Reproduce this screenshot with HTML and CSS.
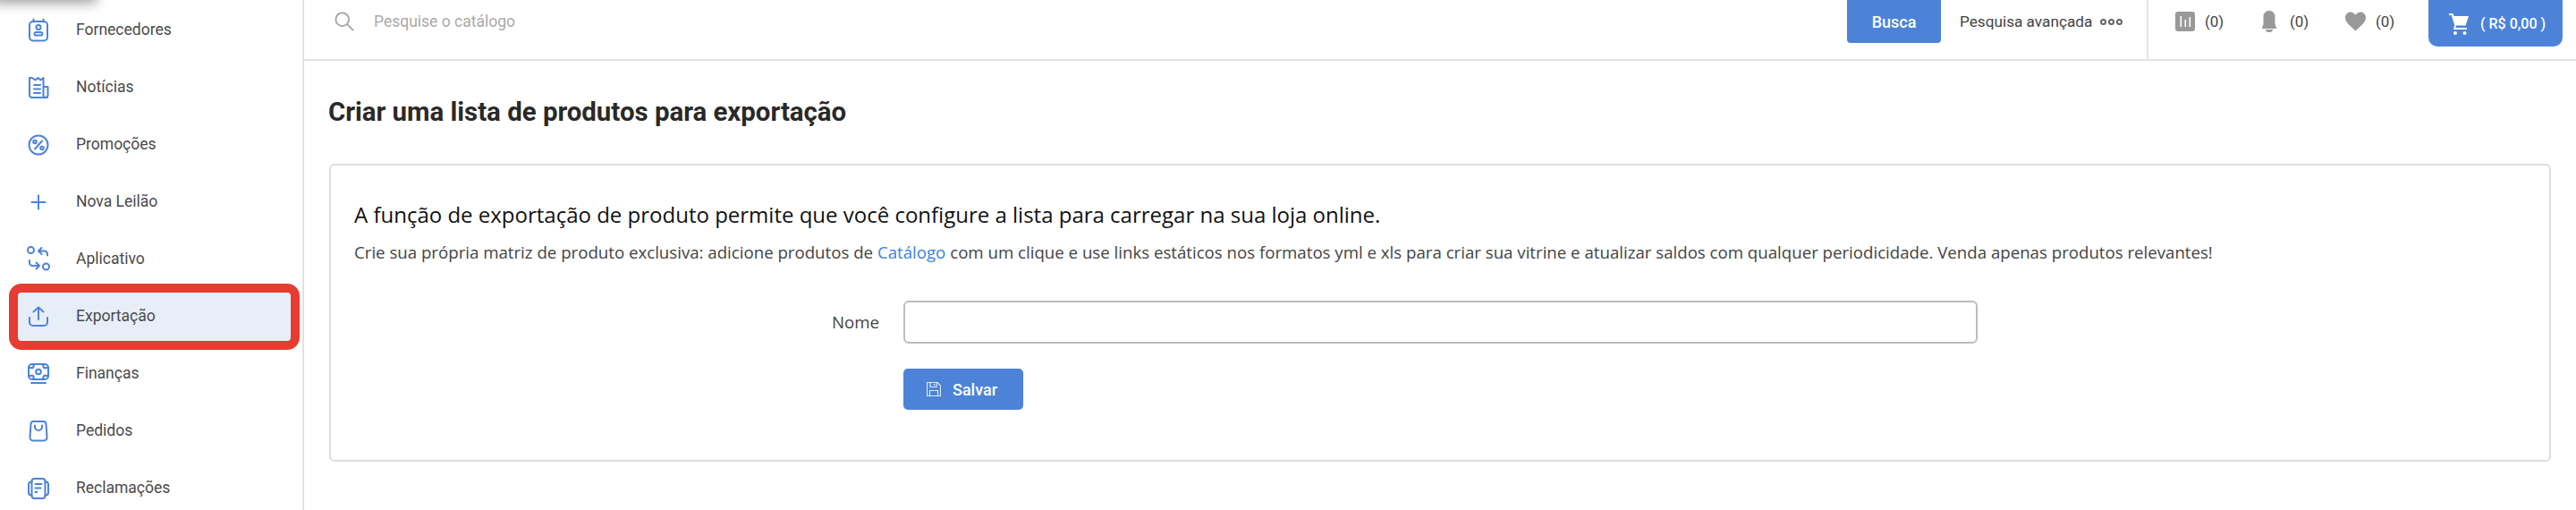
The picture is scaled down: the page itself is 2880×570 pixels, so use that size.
FILE: index.html
```html
<!DOCTYPE html>
<html lang="pt">
<head>
<meta charset="utf-8">
<title>Exportação</title>
<link rel="stylesheet" href="styles.css">
</head>
<body>
<div class="popup-edge"></div>
<div class="app">
  <aside class="sidebar">
    <nav class="menu">
      <a class="item"><svg class="mi" viewBox="0 0 26 26"><rect x="3" y="3" width="20" height="21.500" rx="4"/><path d="M7.500 0.500v3M18.500 0.500v3"/><circle cx="13" cy="9.500" r="2.600"/><rect x="8.500" y="15" width="9" height="3.600" rx="1.800"/></svg><span>Fornecedores</span></a>
      <a class="item"><svg class="mi" viewBox="0 0 26 26"><path d="M3 2v19a3 3 0 0 0 3 3h17M19 12h4.500v9.500a2.500 2.500 0 0 1-5 0V2l-3 2.500-3-2.500-3 2.500L6 2 3 2"/><path d="M8 10h7M8 14.500h7M8 19h7"/></svg><span>Notícias</span></a>
      <a class="item"><svg class="mi" viewBox="0 0 26 26"><circle cx="13" cy="13" r="10.500"/><path d="M17 8.500 9 17.500"/><circle cx="9" cy="9.500" r="1.800"/><circle cx="17" cy="16.500" r="1.800"/></svg><span>Promoções</span></a>
      <a class="item"><svg class="mi" viewBox="0 0 26 26"><path d="M13 5.500v15M5.500 13h15"/></svg><span>Nova Leilão</span></a>
      <a class="item"><svg class="mi" viewBox="0 0 26 26"><circle cx="4.500" cy="2.500" r="3.500"/><path d="M23 8.500V7a3.500 3.500 0 0 0-3.500-3.500H13M16.500 0 13 3.500 16.500 7"/><circle cx="21.500" cy="21" r="3.500"/><path d="M3 14v2.500A3.500 3.500 0 0 0 6.500 20H14M10.500 16.500 14 20l-3.500 3.500"/></svg><span>Aplicativo</span></a>
      <a class="item active"><svg class="mi" viewBox="0 0 26 26"><path d="M13 16V2.500M7.500 7.500 13 2.500l5.500 5"/><path d="M3 14v5a4 4 0 0 0 4 4h12a4 4 0 0 0 4-4v-5"/></svg><span>Exportação</span></a>
      <a class="item"><svg class="mi" viewBox="0 0 26 26"><rect x="2" y="2" width="22" height="17" rx="4"/><circle cx="13" cy="10.500" r="2.800"/><path d="M2 6h2.500a2 2 0 0 0 2-4M24 6h-2.500a2 2 0 0 1-2-4M2 15h2.500a2 2 0 0 1 2 4M24 15h-2.500a2 2 0 0 0-2 4M5 23h16"/></svg><span>Finanças</span></a>
      <a class="item"><svg class="mi" viewBox="0 0 26 26"><path d="M7.500 2h11a3 3 0 0 1 3 2.700l1 15a3.500 3.500 0 0 1-3.500 3.800H7a3.500 3.500 0 0 1-3.500-3.800l1-15A3 3 0 0 1 7.500 2Z"/><path d="M9 6.500v1.500a4 4 0 0 0 8 0V6.500"/></svg><span>Pedidos</span></a>
      <a class="item"><svg class="mi" viewBox="0 0 26 26"><rect x="5.500" y="2" width="15" height="22" rx="3"/><path d="M5.500 5.500H5a3 3 0 0 0-3 3v9a3 3 0 0 0 3 3h.5M20.500 5.500h.5a3 3 0 0 1 3 3v9a3 3 0 0 1-3 3h-.5"/><path d="M9.500 8h7M9.500 12.500h6M9.500 17h2"/></svg><span>Reclamações</span></a>
    </nav>
  </aside>
  <div class="main">
    <header class="topbar">
      <div class="search">
        <svg class="search-icon" viewBox="0 0 24 24"><circle cx="9.500" cy="9.500" r="8"/><path d="m15.500 15.500 7.500 7.500"/></svg>
        <span class="placeholder">Pesquise o catálogo</span>
      </div>
      <a class="btn-search">Busca</a>
      <a class="advanced"><span>Pesquisa avançada</span><span class="dots"><i></i><i></i><i></i></span></a>
      <div class="counters">
        <div class="counter c1"><svg class="ci" viewBox="0 0 22 22"><path fill-rule="evenodd" d="M3 0h16a3 3 0 0 1 3 3v16a3 3 0 0 1-3 3H3a3 3 0 0 1-3-3V3a3 3 0 0 1 3-3Zm2.500 5v12h1.600V5Zm5 4v8h1.600V9Zm5-3v11h1.600V6Z"/></svg><span>(0)</span></div>
        <div class="counter c2"><svg class="ci bell" viewBox="0 0 16 24"><path d="M8 0c3.500 0 6.500 2.500 6.500 6.500v8.500l1.500 4v1H0v-1l1.500-4V6.500C1.500 2.500 4.500 0 8 0Z"/><path d="M4 21h8a4 3 0 0 1-8 0Z"/></svg><span>(0)</span></div>
        <div class="counter c3"><svg class="ci heart" viewBox="0 0 24 22"><path d="M12 22C6 16 0 12 0 6.500 0 2.500 3 0 6 0c2.500 0 4.800 1.300 6 3.500C13.200 1.300 15.500 0 18 0c3 0 6 2.500 6 6.500C24 12 18 16 12 22Z"/></svg><span>(0)</span></div>
      </div>
      <a class="cart"><svg class="cart-icon" viewBox="0 0 22 25"><path d="M0 1h4.500l1.200 3H22l-3.500 10.500H8l-.5 2.500H20v2H5l1.200-5L2.800 3H0Z"/><circle cx="7" cy="23" r="2"/><circle cx="17.500" cy="23" r="2"/></svg><span>( R$ 0,00 )</span></a>
    </header>
    <main class="content">
      <h1 class="title">Criar uma lista de produtos para exportação</h1>
      <section class="card">
        <h2 class="lead">A função de exportação de produto permite que você configure a lista para carregar na sua loja online.</h2>
        <p class="desc">Crie sua própria matriz de produto exclusiva: adicione produtos de <a class="link">Catálogo</a> com um clique e use links estáticos nos formatos yml e xls para criar sua vitrine e atualizar saldos com qualquer periodicidade. Venda apenas produtos relevantes!</p>
        <form class="form">
          <div class="form-row">
            <label class="label">Nome</label>
            <div class="input"></div>
          </div>
          <a class="btn-save"><svg class="save-icon" viewBox="0 0 16 16"><path d="M.5.500h11.500l3.500 3.500v11.500H.5Z"/><path d="M4 .500v5h7v-5M8.500 2v2M3.500 15.500V9.500h9v6"/></svg><span>Salvar</span></a>
        </form>
      </section>
    </main>
  </div>
</div>
</body>
</html>
```
FILE: styles.css
```css
* { box-sizing: border-box; }
html, body { margin: 0; height: 570px; overflow: hidden; background: #fff; }
body { font-family: Roboto, "Liberation Sans", sans-serif; color: #444; position: relative; }

.popup-edge { position: absolute; left: -10px; top: -20px; width: 118px; height: 20px; box-shadow: 0 3px 14px rgba(0,0,0,.4); z-index: 5; }

.app { display: flex; height: 570px; }

.sidebar { width: 340px; flex: none; height: 570px; overflow: hidden; border-right: 2px solid #e2e2e2; padding: 7px 13px 0 20px; }
.menu { display: flex; flex-direction: column; gap: 10px; }
.item { display: flex; align-items: center; gap: 29px; height: 54px; padding-left: 10px; flex: none; font-size: 17.500px; color: #4a4a4a; border-radius: 2px; }
.item span { padding-bottom: 2px; }
.item.active { background: #e8eef8; outline: 10px solid #e63c32; border-radius: 4px; outline-offset: 0; }
.mi { width: 26px; height: 26px; flex: none; fill: none; stroke: #4c83d9; stroke-width: 2; stroke-linecap: round; stroke-linejoin: round; overflow: visible; }

.main { flex: 1; min-width: 0; display: flex; flex-direction: column; }

.topbar { height: 68px; flex: none; display: flex; align-items: flex-start; border-bottom: 2px solid #e4e4e4; }
.search { flex: 1; display: flex; align-items: center; gap: 21px; height: 48px; padding-left: 33px; }
.search-icon { width: 24px; height: 22px; fill: none; stroke: #a4a4a4; stroke-width: 2; }
.placeholder { font-size: 17.500px; color: #a9a9a9; }

.btn-search { width: 105px; height: 48px; background: #4c83d9; color: #fff; font-size: 18px; font-weight: 500; display: flex; align-items: center; justify-content: center; border-radius: 0 0 4px 4px; flex: none; }
.advanced { display: flex; align-items: center; gap: 9px; height: 48px; margin-left: 21px; width: 209px; font-size: 17.200px; color: #444; flex: none; }
.dots { display: flex; gap: 2px; }
.dots i { width: 7px; height: 7px; border: 2px solid #666; border-radius: 50%; display: block; }

.counters { display: flex; align-items: flex-start; height: 66px; border-left: 2px solid #e4e4e4; padding-left: 30px; width: 315px; flex: none; }
.counter { display: flex; align-items: center; gap: 11px; height: 48px; font-size: 17px; color: #444; }
.c1 { width: 97px; }
.c2 { width: 93px; gap: 15px; }
.ci { width: 22px; height: 22px; fill: #999; flex: none; }
.bell { width: 16px; height: 24px; }
.heart { width: 23px; height: 22px; }

.cart { width: 150px; height: 52px; flex: none; background: #4c83d9; color: #fff; display: flex; align-items: center; gap: 13px; padding-left: 23px; border-radius: 0 0 10px 10px; font-size: 16px; font-weight: 500; margin-right: 15px; }
.cart-icon { width: 22px; height: 25px; fill: #fff; flex: none; }

.content { flex: 1; padding: 0 28px; }
.title { margin: 39px 0 0 -1px; font-size: 29.400px; line-height: 36px; font-weight: 700; color: #292929; }
.card { margin-top: 40px; height: 333px; border: 2px solid #dedede; border-radius: 6px; padding: 39px 26px 0; }
.lead { margin: 0; font-family: "Open Sans", "Liberation Sans", sans-serif; font-size: 24px; line-height: 32px; font-weight: 400; color: #111; }
.desc { margin: 13px 0 0; font-family: "Open Sans", "Liberation Sans", sans-serif; font-size: 18.660px; line-height: 26px; color: #444; white-space: nowrap; }
.link { color: #3d7fdc; }

.form { margin-top: 41px; display: flex; flex-direction: column; gap: 28px; padding-left: 614px; }
.form-row { display: flex; align-items: center; gap: 27px; margin-left: -80px; }
.label { font-family: "Open Sans", "Liberation Sans", sans-serif; font-size: 18.660px; color: #444; width: 53px; padding-bottom: 2px; }
.input { width: 1201px; height: 48px; border: 2px solid #bdbdbd; border-radius: 6px; background: #fff; }
.btn-save { width: 134px; height: 46px; background: #4c83d9; color: #fff; border-radius: 5px; display: flex; align-items: center; gap: 13px; padding-left: 26px; font-size: 18px; font-weight: 500; }
.save-icon { width: 16px; height: 16px; fill: none; stroke: #dfe9fa; stroke-width: 1.200; flex: none; }
```
